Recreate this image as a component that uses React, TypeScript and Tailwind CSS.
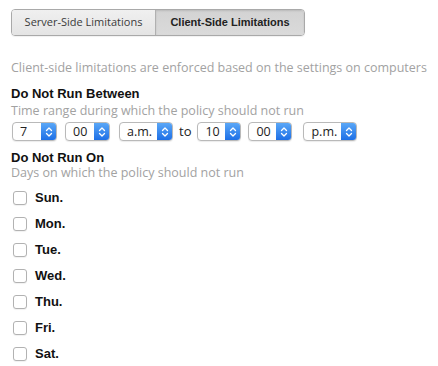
const font = "font-['Open_Sans','DejaVu_Sans',sans-serif]";
const bold = "font-['Liberation_Sans','Arial',sans-serif] font-bold";

function Stepper({ value, width }: { value: string; width: string }) {
  return (
    <div
      className={`flex h-[19px] ${width} items-stretch overflow-hidden rounded-[4px] border border-[#b9b9b9] bg-white shadow-[0_1px_1px_rgba(0,0,0,0.08)]`}
    >
      <span className="flex flex-1 items-center pl-[7px] text-[12.5px] leading-none text-[#222]">{value}</span>
      <span className="flex w-[15px] items-center justify-center bg-gradient-to-b from-[#5aa7f7] to-[#1d6fe6]">
        <svg width="8" height="12" viewBox="0 0 8 12" fill="none" stroke="white" strokeWidth="1.3" strokeLinecap="round" strokeLinejoin="round">
          <path d="M1.5 4.5 L4 2 L6.5 4.5" />
          <path d="M1.5 7.5 L4 10 L6.5 7.5" />
        </svg>
      </span>
    </div>
  );
}

const days = ["Sun.", "Mon.", "Tue.", "Wed.", "Thu.", "Fri.", "Sat."];

export default function App() {
  return (
    <div className={`h-[366px] w-[438px] overflow-hidden bg-white pl-[11px] ${font}`}>
      <div className="mt-[9px] flex h-[27px] w-[294px] overflow-hidden rounded-[4px] border border-[#a9a9a9] shadow-[0_1px_1px_rgba(0,0,0,0.06)]">
        <div className="flex w-[144px] items-center justify-center whitespace-nowrap border-r border-[#b0b0b0] bg-gradient-to-b from-[#f0f0f0] to-[#e4e4e4] text-[11px] text-[#3a3a3a]">
          Server-Side Limitations
        </div>
        <div className={`flex flex-1 items-center justify-center whitespace-nowrap bg-gradient-to-b from-[#d3d3d3] to-[#dadada] text-[11px] text-[#222] shadow-[inset_0_1px_2px_rgba(0,0,0,0.12)] ${bold}`}>
          Client-Side Limitations
        </div>
      </div>

      <p className="mt-[24px] whitespace-nowrap text-[12.5px] leading-[16px] text-[#a2a2a2]">
        Client-side limitations are enforced based on the settings on computers
      </p>

      <h3 className={`mt-[10px] text-[13px] leading-[16px] text-[#111] ${bold}`}>Do Not Run Between</h3>
      <p className="mt-[1px] text-[12.5px] leading-[16px] text-[#a2a2a2]">Time range during which the policy should not run</p>

      <div className="mt-[3px] flex items-center pl-[1px]">
        <Stepper value="7" width="w-[45px]" />
        <div className="w-[8px]" />
        <Stepper value="00" width="w-[45px]" />
        <div className="w-[9px]" />
        <Stepper value="a.m." width="w-[54px]" />
        <span className="mx-[6px] text-[13px] text-[#222]">to</span>
        <Stepper value="10" width="w-[44px]" />
        <div className="w-[7px]" />
        <Stepper value="00" width="w-[44px]" />
        <div className="w-[11px]" />
        <Stepper value="p.m." width="w-[54px]" />
      </div>

      <h3 className={`mt-[8px] text-[13px] leading-[16px] text-[#111] ${bold}`}>Do Not Run On</h3>
      <p className="text-[12.5px] leading-[14px] text-[#a2a2a2]">Days on which the policy should not run</p>

      <ul className="mt-[5px] flex flex-col">
        {days.map((d) => (
          <li key={d} className="flex h-[26px] items-center">
            <span className="ml-[2px] h-[14px] w-[14px] rounded-[3px] border border-[#b2b2b2] bg-white shadow-[0_1px_1px_rgba(0,0,0,0.06)]" />
            <span className={`ml-[8px] text-[13px] text-[#111] ${bold}`}>{d}</span>
          </li>
        ))}
      </ul>
    </div>
  );
}
